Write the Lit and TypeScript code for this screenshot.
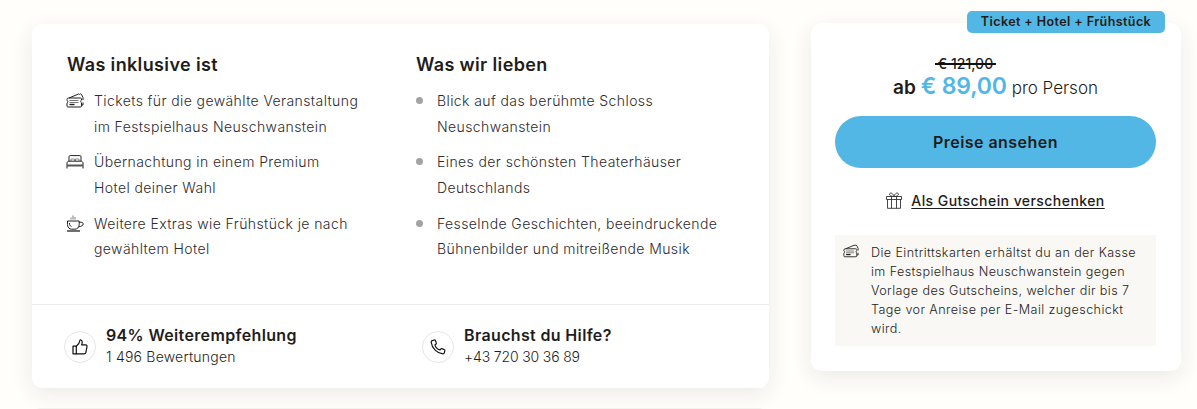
import { LitElement, html, css, svg } from "lit";
import { customElement } from "lit/decorators.js";

const ticket = svg`<svg class="ic" viewBox="0 0 18 15" width="18" height="15" fill="none" stroke="#1f1f1f" stroke-width="1"><path d="M1 6.5 C1 5.5 1.5 5 2.5 5 L14 5 C15 5 15.5 5.3 15.5 5.8 V7 C14.5 7.3 14.5 9.5 15.5 9.8 V13 C15.5 13.7 15 14 14.5 14 H2 C1.4 14 1 13.6 1 13 V10 C2 9.6 2 7.6 1 7.2 Z"/><path d="M3 5 L12.5 1 L13.5 1.4 L14.5 0.8 L15.5 1.5 L17 4.5 V7 M15.6 12 H17 V9.5"/><path d="M3.5 7.5 H12.5 M3.5 9.5 H12.5" stroke="#777"/><path d="M3.5 11.5 H8.5" stroke-width="1.4"/></svg>`;
const bed = svg`<svg class="ic" viewBox="0 0 18 14" width="18" height="14" fill="none" stroke="#222" stroke-width="1"><path d="M3 6 V1.6 C3 1 3.5 .6 4.2 .6 H13.8 C14.5 .6 15 1 15 1.6 V6"/><path d="M5 6 V4 H8.5 V6 M9.5 6 V4 H13 V6" stroke="#888"/><path d="M1 13.5 V8 C1 7 2 6.2 3 6.2 H15 C16 6.2 17 7 17 8 V13.5"/><path d="M1 10.5 H17" stroke-width="2" stroke="#555"/></svg>`;
const cup = svg`<svg class="ic" viewBox="0 0 18 17" width="18" height="17" fill="none" stroke="#222" stroke-width="1"><path d="M7 0.5 V4.5 M9 2 V4.5 M5 2.5 V4.5" stroke="#777"/><path d="M1.5 6 H13.2 V9.5 C13.2 12.5 11 14.2 9 14.2 H5.5 C3.5 14.2 1.5 12.5 1.5 9.5 Z"/><path d="M13.2 7.2 H15 C16.4 7.2 17.2 8 17.2 9 C17.2 10.4 15.5 11.5 12.6 11.8"/><path d="M3.5 8 C3.5 10 4 11 5.5 11.5"/><path d="M1 16 H14" stroke-width="1.3"/></svg>`;
const thumb = svg`<svg viewBox="0 0 16 16" width="16" height="16" fill="none" stroke="#111" stroke-width="1.2" stroke-linejoin="round" stroke-linecap="round"><path d="M1 7.2 H4.3 V14.8 H1 Z"/><path d="M4.3 7.2 C6 6 7.5 4.5 7.8 1.8 C7.9 1 8.4 0.8 9 1 C10.2 1.4 10.4 3.4 9.7 5.8 H13.6 C14.6 5.8 15.2 6.6 15 7.5 L13.9 13.4 C13.7 14.3 13.1 14.8 12.2 14.8 H4.3"/></svg>`;
const phone = svg`<svg viewBox="0 0 16 16" width="16" height="16" fill="none" stroke="#111" stroke-width="1.2" stroke-linejoin="round"><path d="M2.2 1.6 L4.4 1 C4.9 0.9 5.2 1.1 5.4 1.5 L6.3 3.9 C6.5 4.3 6.3 4.7 6 5 L4.9 5.9 C5.5 8 7.6 10.3 9.9 11 L10.9 9.8 C11.2 9.5 11.6 9.4 12 9.6 L14.4 10.8 C14.8 11 15 11.3 14.9 11.7 L14.3 13.8 C14.1 14.5 13.5 14.9 12.8 14.8 C7.2 14.4 1.9 9.2 1.2 3.2 C1.1 2.4 1.5 1.8 2.2 1.6 Z"/></svg>`;
const gift = svg`<svg viewBox="0 0 16 17" width="16" height="17" fill="none" stroke="#333" stroke-width=".9"><path d="M0.5 4.5 H15.5 V7.5 H0.5 Z"/><path d="M1.5 7.5 V16.3 H14.5 V7.5"/><path d="M5.5 4.5 V16.3 M10.5 4.5 V16.3"/><path d="M8 4.5 C5 4.5 3.5 3.5 3.5 2.2 C3.5 0.6 6.5 0 8 4.5 C9.5 0 12.5 0.6 12.5 2.2 C12.5 3.5 11 4.5 8 4.5 Z"/></svg>`;

@customElement("app-root")
export class AppRoot extends LitElement {
  static styles = css`
    :host { display: block; height: 409px; overflow: hidden; background: #fffefb; color: #1f1d1b;
      font-family: "Inter", "Liberation Sans", sans-serif; font-weight: 300; }
    * { box-sizing: border-box; }
    .page { display: flex; align-items: flex-start; padding-left: 32px; gap: 42px; }
    .left { width: 737px; padding-top: 24px; }
    .card { background: #fff; border-radius: 10px; box-shadow: 0 6px 22px rgba(40,35,25,.09); }
    .top { display: grid; grid-template-columns: 349px 1fr; padding: 28px 35px 0; height: 281px; border-bottom: 1px solid #ececea; }
    h2 { margin: 0 0 11px; font-size: 18px; line-height: 25px; font-weight: 600; letter-spacing: .36px; }
    ul { list-style: none; margin: 0; padding: 0; }
    li { display: flex; font-size: 14px; line-height: 25.5px; margin-bottom: 10.3px; letter-spacing: .4px; color: #2c2b30; }
    .inc .icw { width: 28px; margin-left: -1px; flex: none; height: 25px; display: flex; align-items: center; }
    .ic { display: block; }
    .love .dot { width: 21px; flex: none; height: 25px; display: flex; align-items: center; }
    .love .dot i { width: 7px; height: 7px; border-radius: 50%; background: #a3a3a3; }
    .bottom { display: grid; grid-template-columns: 358px 1fr; padding: 19px 32px 0; height: 83px; }
    .stat { display: flex; gap: 10px; }
    .circle { width: 32px; height: 32px; margin-top: 7px; border: 1px solid #e6e6e6; border-radius: 50%; display: flex; align-items: center; justify-content: center; flex: none; }
    .stat b { display: block; font-size: 16px; line-height: 22px; font-weight: 600; letter-spacing: .35px; }
    .stat span { display: block; font-size: 14px; line-height: 22px; letter-spacing: .22px; }
    .stat span.tel { letter-spacing: -.15px; }
    .next { margin-top: 20px; height: 10px; border: 1px solid #f6f3ee; border-radius: 10px; width: 730px; margin-left: 3px; background: #fff; }
    .right { position: relative; margin-top: 23px; width: 370px; height: 348px; padding: 0 25px 0 24px; text-align: center; }
    .badge { position: absolute; top: -12px; right: 16px; width: 198px; height: 22px; border-radius: 5px; background: #52b7e5; font-size: 12.5px; line-height: 22px; font-weight: 600; letter-spacing: .42px; }
    .was { padding: 31px 60px 0 0; height: 48px; font-size: 14px; line-height: 20px; font-weight: 500; }
    .was span { position: relative; display: inline-block; }
    .was span::after { content: ""; position: absolute; left: -3px; right: -3px; top: 9px; height: 1.5px; background: #111; }
    .price { display: flex; justify-content: center; align-items: baseline; gap: 5px; font-size: 17px; height: 45px; line-height: 30px; }
    .price b { font-weight: 600; font-size: 19px; }
    .price em { font-style: normal; font-weight: 600; font-size: 23px; letter-spacing: -.2px; color: #52b7e5; }
    .btn { height: 52px; border-radius: 26px; background: #52b7e5; font-size: 16px; font-weight: 600; line-height: 52px; letter-spacing: .45px; }
    .gift { display: flex; justify-content: center; align-items: center; gap: 9px; height: 24px; margin-top: 20px; font-size: 14px; font-weight: 500; letter-spacing: .44px; }
    .gift u { text-underline-offset: 2px; }
    .note { display: flex; margin-top: 23px; height: 111px; padding: 8px 8px 0; background: #f9f8f5; text-align: left; font-size: 12.6px; line-height: 19px; font-weight: 300; letter-spacing: .4px; color: #1f1d1b; }
    .note .nic { width: 28px; flex: none; padding-top: 1px; }
    .note .ic { width: 16px; height: 14px; }
  `;
  render() {
    return html`<div class="page">
      <div class="left">
        <div class="card">
          <div class="top">
            <div class="inc">
              <h2>Was inklusive ist</h2>
              <ul>
                <li><span class="icw">${ticket}</span><span>Tickets für die gewählte Veranstaltung<br />im Festspielhaus Neuschwanstein</span></li>
                <li><span class="icw">${bed}</span><span>Übernachtung in einem Premium<br />Hotel deiner Wahl</span></li>
                <li><span class="icw">${cup}</span><span>Weitere Extras wie Frühstück je nach<br />gewähltem Hotel</span></li>
              </ul>
            </div>
            <div class="love">
              <h2>Was wir lieben</h2>
              <ul>
                <li><span class="dot"><i></i></span><span>Blick auf das berühmte Schloss<br />Neuschwanstein</span></li>
                <li><span class="dot"><i></i></span><span>Eines der schönsten Theaterhäuser<br />Deutschlands</span></li>
                <li><span class="dot"><i></i></span><span>Fesselnde Geschichten, beeindruckende<br />Bühnenbilder und mitreißende Musik</span></li>
              </ul>
            </div>
          </div>
          <div class="bottom">
            <div class="stat"><div class="circle">${thumb}</div><div><b>94% Weiterempfehlung</b><span>1 496 Bewertungen</span></div></div>
            <div class="stat"><div class="circle">${phone}</div><div><b>Brauchst du Hilfe?</b><span class="tel">+43 720 30 36 89</span></div></div>
          </div>
        </div>
        <div class="next"></div>
      </div>
      <div class="card right">
        <div class="badge">Ticket + Hotel + Frühstück</div>
        <div class="was"><span>€ 121,00</span></div>
        <div class="price"><b>ab</b><em>€ 89,00</em><span>pro Person</span></div>
        <div class="btn">Preise ansehen</div>
        <div class="gift">${gift}<u>Als Gutschein verschenken</u></div>
        <div class="note"><span class="nic">${ticket}</span><span>Die Eintrittskarten erhältst du an der Kasse<br />im Festspielhaus Neuschwanstein gegen<br />Vorlage des Gutscheins, welcher dir bis 7<br />Tage vor Anreise per E-Mail zugeschickt<br />wird.</span></div>
      </div>
    </div>`;
  }
}
